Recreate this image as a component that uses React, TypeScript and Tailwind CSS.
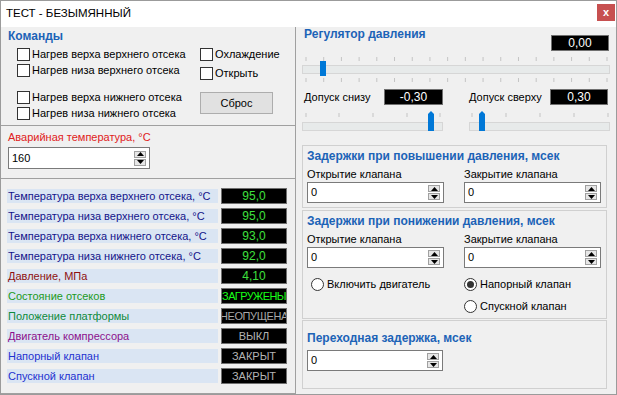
import React from 'react'

const ArrowUp = () => (
  <svg width="7" height="4" viewBox="0 0 7 4"><polygon points="0,4 7,4 3.5,0" fill="#000" /></svg>
)
const ArrowDown = () => (
  <svg width="7" height="4" viewBox="0 0 7 4"><polygon points="0,0 7,0 3.5,4" fill="#000" /></svg>
)

function Spin({ value, className = '' }: { value: string; className?: string }) {
  return (
    <div className={`flex items-center bg-white border border-[#7a7a7a] h-[21px] pl-[3px] pr-[3px] ${className}`}>
      <span className="flex-1 leading-none">{value}</span>
      <div className="flex flex-col gap-[1px]">
        <div className="w-[12px] h-[7px] bg-[#e6e6e6] border border-[#a0a0a0] flex items-center justify-center"><ArrowUp /></div>
        <div className="w-[12px] h-[7px] bg-[#e6e6e6] border border-[#a0a0a0] flex items-center justify-center"><ArrowDown /></div>
      </div>
    </div>
  )
}

function Check({ label }: { label: string }) {
  return (
    <div className="flex items-center h-[16px] gap-[2px] whitespace-nowrap">
      <div className="w-[13px] h-[13px] bg-white border border-[#333] shrink-0" />
      <span>{label}</span>
    </div>
  )
}

function Radio({ label, checked = false }: { label: string; checked?: boolean }) {
  return (
    <div className="flex items-center h-[16px] gap-[3px] whitespace-nowrap">
      <div className="w-[13px] h-[13px] rounded-full bg-white border border-[#333] flex items-center justify-center shrink-0">
        {checked && <div className="w-[7px] h-[7px] rounded-full bg-[#333]" />}
      </div>
      <span>{label}</span>
    </div>
  )
}

function Readout({ value, w }: { value: string; w: string }) {
  return (
    <div className={`${w} h-[16px] bg-black border border-[#707070] text-white text-[12px] flex items-center justify-center leading-none`}>
      {value}
    </div>
  )
}

function MainSlider() {
  const ticks = Array.from({ length: 18 }, (_, i) => 4 + i * (301 / 17))
  return (
    <svg width="308" height="27" className="block">
      {ticks.map((x, i) => (
        <g key={i}>
          <line x1={x} x2={x} y1="1" y2="5" stroke="#c4c4c4" />
          <line x1={x} x2={x} y1="22" y2="26" stroke="#c4c4c4" />
        </g>
      ))}
      <rect x="0.5" y="9.5" width="307" height="8" fill="#e7eaea" stroke="#d6d6d6" />
      <rect x="18" y="5" width="6" height="15" fill="#0078d7" />
    </svg>
  )
}

function SmallSlider({ thumb, ticks }: { thumb: number; ticks: number[] }) {
  return (
    <svg width="141" height="22" className="block">
      {ticks.map((x, i) => (
        <line key={i} x1={x} x2={x} y1="3" y2="7" stroke="#c4c4c4" />
      ))}
      <rect x="0.5" y="12.5" width="140" height="8" fill="#e7eaea" stroke="#d6d6d6" />
      <polygon points={`${thumb},21 ${thumb},4 ${thumb + 3},1 ${thumb + 6},4 ${thumb + 6},21`} fill="#0078d7" />
    </svg>
  )
}

const rows = [
  { label: 'Температура верха верхнего отсека, °C', color: 'text-[#14148a]', value: '95,0', vc: 'text-[#3ee03e] text-[12px]' },
  { label: 'Температура низа верхнего отсека, °C', color: 'text-[#14148a]', value: '95,0', vc: 'text-[#3ee03e] text-[12px]' },
  { label: 'Температура верха нижнего отсека, °C', color: 'text-[#14148a]', value: '93,0', vc: 'text-[#3ee03e] text-[12px]' },
  { label: 'Температура низа нижнего отсека, °C', color: 'text-[#14148a]', value: '92,0', vc: 'text-[#3ee03e] text-[12px]' },
  { label: 'Давление, МПа', color: 'text-[#8e1010]', value: '4,10', vc: 'text-[#3ee03e] text-[12px]' },
  { label: 'Состояние отсеков', color: 'text-[#1c9a1c]', value: 'ЗАГРУЖЕНЫ', vc: 'text-[#18ff18] tracking-[-0.6px]' },
  { label: 'Положение платформы', color: 'text-[#0f8a3c]', value: 'НЕОПУЩЕНА', vc: 'text-[#a8a8a8] tracking-[-0.4px]' },
  { label: 'Двигатель компрессора', color: 'text-[#8c108c]', value: 'ВЫКЛ', vc: 'text-[#b4b4b4]' },
  { label: 'Напорный клапан', color: 'text-[#1e32d0]', value: 'ЗАКРЫТ', vc: 'text-[#b4b4b4]' },
  { label: 'Спускной клапан', color: 'text-[#1e32d0]', value: 'ЗАКРЫТ', vc: 'text-[#b4b4b4]' },
]

export default function App() {
  return (
    <div className="w-[617px] h-[395px] border border-[#9b9b9b] bg-[#f0f0f0] flex flex-col font-['Liberation_Sans',Arial,sans-serif] text-[11px] text-black overflow-hidden">
      {/* title bar */}
      <div className="h-[26px] bg-white flex items-center justify-between pl-[5px] pr-[1px]">
        <span className="text-[11.5px]">ТЕСТ - БЕЗЫМЯННЫЙ</span>
        <div className="w-[18px] h-[17px] bg-[#c75050] text-white text-[11px] font-bold flex items-center justify-center leading-none self-start mt-[3px]">x</div>
      </div>

      <div className="flex flex-1">
        {/* left column */}
        <div className="w-[295px] border-r border-[#a0a0a0] flex flex-col">
          <div className="h-[99px] border-b border-[#a0a0a0] pl-[7px] pt-[2px]">
            <div className="leading-[14px] font-bold text-[12px] text-[#1c63b7]">Команды</div>
            <div className="flex mt-[3px]">
              <div className="w-[192px] pl-[9px]">
                <Check label="Нагрев верха верхнего отсека" />
                <Check label="Нагрев низа верхнего отсека" />
                <div className="h-[11px]" />
                <Check label="Нагрев верха нижнего отсека" />
                <Check label="Нагрев низа нижнего отсека" />
              </div>
              <div>
                <Check label="Охлаждение" />
                <div className="h-[3px]" />
                <Check label="Открыть" />
                <button className="mt-[11px] w-[73px] h-[22px] bg-[#e1e1e1] border border-[#adadad] text-[11px]">Сброс</button>
              </div>
            </div>
          </div>

          <div className="h-[53px] border-b border-[#a0a0a0] pl-[7px] pt-[4px]">
            <div className="leading-[14px] text-[#e02020]">Аварийная температура, °C</div>
            <Spin value="160" className="w-[142px] h-[22px] mt-[3px]" />
          </div>

          <div className="flex-1 border-b border-[#a0a0a0] pl-[6px] pt-[9px] flex flex-col gap-[4px]">
            {rows.map((r) => (
              <div key={r.label} className="flex items-center h-[16px] gap-[3px]">
                <div className={`w-[211px] h-[14px] bg-[#dae5f3] pl-[1px] flex items-center leading-none whitespace-nowrap ${r.color}`}>{r.label}</div>
                <div className={`w-[66px] h-[16px] bg-black border border-[#707070] flex items-center justify-center overflow-hidden whitespace-nowrap leading-none ${r.vc}`}>
                  {r.value}
                </div>
              </div>
            ))}
          </div>
        </div>

        {/* right column */}
        <div className="flex-1 flex flex-col">
          <div className="h-[25px] flex justify-between pl-[8px] pr-[7px]">
            <div className="leading-[14px] font-bold text-[12px] text-[#1c63b7]">Регулятор давления</div>
            <Readout value="0,00" w="w-[58px] mt-[8px]" />
          </div>
          <div className="pl-[6px] mt-[4px]">
            <MainSlider />
          </div>
          <div className="flex items-center h-[16px] mt-[6px] pl-[8px] whitespace-nowrap">
            <span className="w-[80px]">Допуск снизу</span>
            <Readout value="-0,30" w="w-[59px]" />
            <span className="w-[26px]" />
            <span className="w-[81px]">Допуск сверху</span>
            <Readout value="0,30" w="w-[58px]" />
          </div>
          <div className="flex gap-[26px] pl-[6px] mt-[5px]">
            <SmallSlider thumb={126} ticks={[4, 37, 71, 105, 138]} />
            <SmallSlider thumb={10} ticks={[3, 37, 71, 105, 139]} />
          </div>

          <div className="ml-[6px] w-[305px] mt-[13px] border border-[#d0d0d0] pl-[4px] pt-[3px] pb-[4px]">
            <div className="leading-[14px] font-bold text-[12px] text-[#1c63b7]">Задержки при повышении давления, мсек</div>
            <div className="flex mt-[4px]">
              <div className="w-[157px]">
                <div className="leading-[14px]">Открытие клапана</div>
                <Spin value="0" className="w-[137px] mt-[1px]" />
              </div>
              <div>
                <div className="leading-[14px]">Закрытие клапана</div>
                <Spin value="0" className="w-[137px] mt-[1px]" />
              </div>
            </div>
          </div>

          <div className="ml-[6px] w-[305px] mt-[2px] border border-[#d0d0d0] pl-[4px] pt-[3px] pb-[4px]">
            <div className="leading-[14px] font-bold text-[12px] text-[#1c63b7]">Задержки при понижении давления, мсек</div>
            <div className="flex mt-[4px]">
              <div className="w-[157px]">
                <div className="leading-[14px]">Открытие клапана</div>
                <Spin value="0" className="w-[137px] mt-[1px]" />
                <div className="pl-[4px] mt-[8px]">
                  <Radio label="Включить двигатель" />
                </div>
              </div>
              <div>
                <div className="leading-[14px]">Закрытие клапана</div>
                <Spin value="0" className="w-[137px] mt-[1px]" />
                <div className="mt-[8px]">
                  <Radio label="Напорный клапан" checked />
                </div>
                <div className="mt-[6px]">
                  <Radio label="Спускной клапан" />
                </div>
              </div>
            </div>
          </div>

          <div className="ml-[6px] w-[305px] mt-[1px] h-[69px] border border-[#d0d0d0] pl-[4px] pt-[10px]">
            <div className="leading-[14px] font-bold text-[12px] text-[#1c63b7]">Переходная задержка, мсек</div>
            <Spin value="0" className="w-[136px] mt-[5px]" />
          </div>
        </div>
      </div>
    </div>
  )
}
